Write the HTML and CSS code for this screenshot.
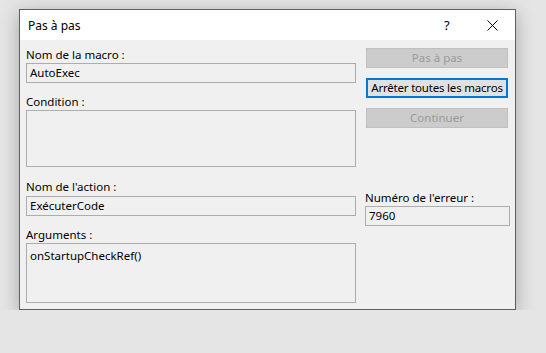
FILE: index.html
```html
<!DOCTYPE html>
<html lang="fr">
<head>
    <meta charset="UTF-8">
    <title>Pas à pas</title>
    <link rel="stylesheet" href="styles.css">
</head>
<body>
    <div class="dialog">
        <div class="title-bar">
            <span class="title">Pas à pas</span>
            <span class="help">?</span>
            <span class="close">
                <svg width="11" height="11" viewBox="0 0 11 11">
                    <path d="M0.5 0.5 L10.5 10.5 M10.5 0.5 L0.5 10.5" stroke="#000" stroke-width="1" fill="none"/>
                </svg>
            </span>
        </div>

        <div class="dialog-body">
            <div class="left-col">
                <div class="label">Nom de la macro :</div>
                <div class="field">AutoExec</div>

                <div class="label label-cond">Condition :</div>
                <div class="field area area-cond"></div>

                <div class="label label-action">Nom de l'action :</div>
                <div class="field field-action">ExécuterCode</div>

                <div class="label label-args">Arguments :</div>
                <div class="field area area-args">onStartupCheckRef()</div>
            </div>

            <div class="right-col">
                <div class="btn disabled">Pas à pas</div>
                <div class="btn default">Arrêter toutes les macros</div>
                <div class="btn disabled">Continuer</div>

                <div class="label label-err">Numéro de l'erreur :</div>
                <div class="field field-err">7960</div>
            </div>
        </div>
    </div>
</body>
</html>
```

FILE: styles.css
```css
body {
    margin: 0;
    background-color: #e5e5e5;
    font-family: 'Noto Sans', sans-serif;
    font-size: 11.5px;
    color: #000;
}

.dialog {
    margin: 9px 0 0 19px;
    width: 497px;
    height: 301px;
    box-sizing: border-box;
    border: 1px solid #5f5f5f;
    background-color: #f0f0f0;
    box-shadow: 0 4px 18px rgba(0, 0, 0, 0.28);
    display: flex;
    flex-direction: column;
}

.title-bar {
    height: 30px;
    background-color: #fff;
    display: flex;
    align-items: center;
    padding-left: 8px;
}

.title {
    flex: 1;
    margin-top: 1px;
    font-size: 12px;
}

.help {
    width: 12px;
    margin-right: 31px;
    font-size: 13px;
}

.close {
    display: flex;
    margin-right: 17px;
}

.dialog-body {
    display: flex;
    padding: 7px 6px 6px 6px;
    gap: 9px;
}

.left-col {
    width: 330px;
    display: flex;
    flex-direction: column;
}

.right-col {
    flex: 1;
    display: flex;
    flex-direction: column;
    padding-top: 1px;
}

.label {
    height: 15px;
    line-height: 15px;
    margin-bottom: 1px;
    white-space: nowrap;
}

.field {
    height: 20px;
    box-sizing: border-box;
    border: 1px solid #adadad;
    padding: 0 3px;
    line-height: 18px;
    white-space: nowrap;
}

.area {
    line-height: 16px;
    padding-top: 4px;
}

.label-cond {
    margin-top: 11px;
}

.area-cond {
    height: 57px;
}

.label-action {
    margin-top: 12px;
    margin-bottom: 2px;
}

.label-args {
    margin-top: 11px;
}

.area-args {
    height: 60px;
}

.btn {
    height: 20px;
    box-sizing: border-box;
    margin: 0 1px 10px 1px;
    text-align: center;
    line-height: 18px;
    border: 1px solid #bfbfbf;
    white-space: nowrap;
}

.btn.disabled {
    background-color: #cccccc;
    color: #9a9a9a;
}

.btn.default {
    background-color: #e1e1e1;
    border: 2px solid #0078d7;
    line-height: 16px;
    letter-spacing: -0.2px;
}

.label-err {
    margin-top: 52px;
}

.field-err {
    margin-right: -1px;
}
```
